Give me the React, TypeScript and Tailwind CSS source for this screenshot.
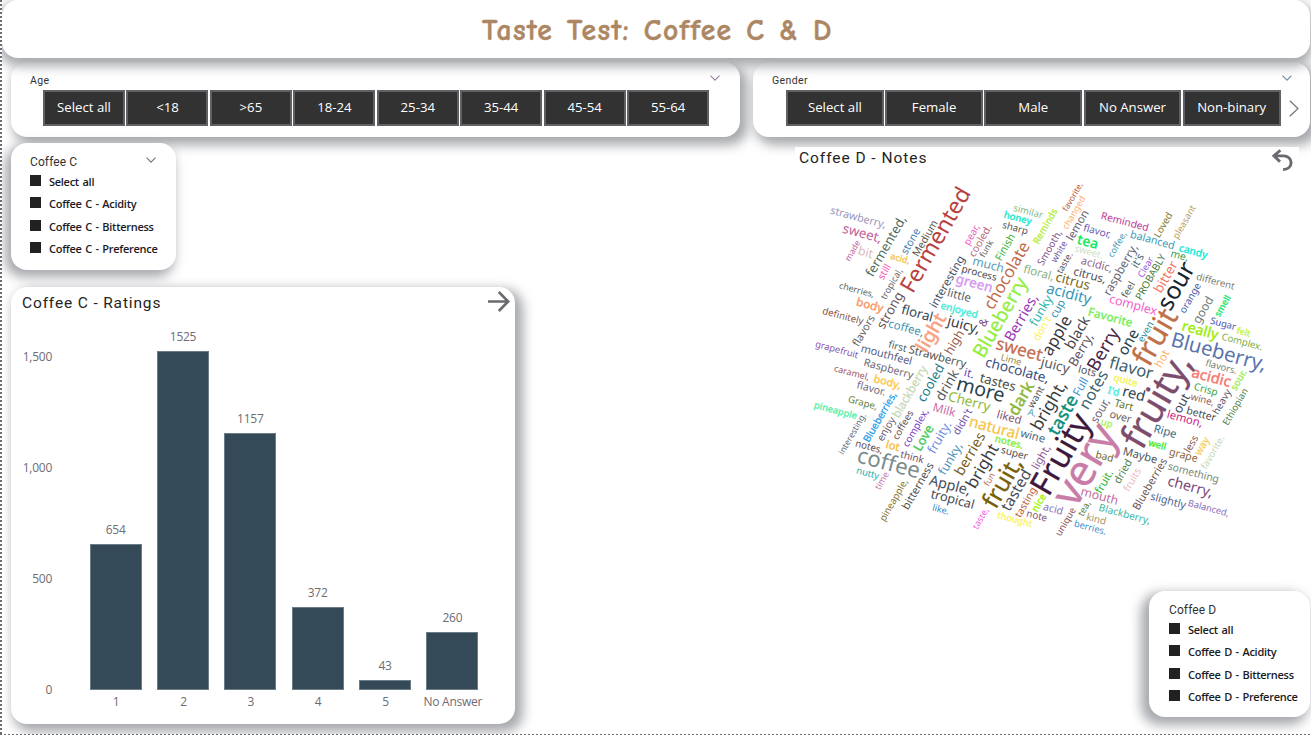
import React from 'react';

type Tilt = 'h' | 'v';
type Word = [string, number, number, number, Tilt, string, boolean?];

// text, centre x, centre y, run length, tilt, colour, heavier weight
const WORDS: Word[] = [
  ['strawberry,', 858, 218, 56, 'h', '#9a94b8'],
  ['sweet,', 862, 234, 39, 'h', '#c0609a'],
  ['made', 853, 251, 21, 'v', '#c060a0'],
  ['bit', 865.3, 253, 14, 'h', '#e0b8bc'],
  ['fermented,', 886.5, 246.5, 67, 'v', '#4f6b5c'],
  ['stone', 911, 241.5, 27, 'v', '#3f7ab0'],
  ['Medium', 925.5, 238.5, 39, 'v', '#5a5a50'],
  ['acid,', 900, 259, 18.7, 'h', '#f2c84b', true],
  ['Fermented', 936.5, 240.5, 116, 'v', '#b8423f'],
  ['still', 884.7, 272, 15, 'v', '#f05ab0'],
  ['tropical,', 892, 284, 33.5, 'v', '#66666e'],
  ['cherries,', 856.5, 290.5, 35, 'h', '#5c6a68'],
  ['body', 869.6, 305.7, 26.5, 'h', '#f79a6a', true],
  ['definitely', 842.7, 316.5, 41, 'h', '#8a5648'],
  ['strong', 890.6, 310.7, 39, 'v', '#6b5252'],
  ['floral', 917, 314, 31, 'h', '#33475a'],
  ['coffee,', 906, 328.7, 35, 'h', '#3f93b0'],
  ['flavors', 864, 331, 33, 'v', '#5f5f62'],
  ['interesting', 947.7, 282, 57, 'v', '#3f4f60'],
  ['little', 959, 296, 23, 'h', '#5f5f66'],
  ['much', 988, 265.3, 31, 'h', '#5a9ab8'],
  ['process', 979, 273.7, 35, 'h', '#4c4c4c'],
  ['green', 974, 284, 36.5, 'h', '#d69af0', true],
  ['enjoyed', 959, 310.7, 37, 'h', '#45e8d4', true],
  ['juicy,', 963.5, 325.5, 32, 'h', '#3c3c42'],
  ['pear,', 972, 235, 21, 'v', '#f060c0'],
  ['cooled.', 980.7, 241, 34, 'v', '#b86a78'],
  ['funk', 986.7, 249, 17, 'v', '#5a5a5a'],
  ['Finish', 1005.5, 247.5, 28, 'v', '#38b030'],
  ['chocolate', 1007.5, 276, 74, 'v', '#c06a48'],
  ['similar', 1028, 212, 29, 'h', '#8cb888'],
  ['honey', 1017.5, 218.5, 27, 'h', '#14e8c8', true],
  ['sharp', 1015, 228.5, 25, 'h', '#565656'],
  ['Reminds', 1045.6, 226.5, 38, 'v', '#b8ee48', true],
  ['floral,', 1038.6, 273.3, 30, 'h', '#88b080'],
  ['Blueberry', 1001, 318, 88, 'v', '#92ee40', true],
  ['Berries,', 1022, 318, 51, 'v', '#9a38b8'],
  ['funky', 1041.5, 311, 32, 'v', '#30b8b0'],
  ["don't", 1042.5, 329, 25, 'v', '#fbf060'],
  ['cup', 1058, 309, 18, 'v', '#3898b8'],
  ['&', 984, 322.7, 7, 'v', '#80507e'],
  ['Smooth,', 1050, 248, 38, 'v', '#84508a'],
  ['white', 1059.5, 252, 22, 'v', '#6a58a8'],
  ['taste.', 1065, 263, 22, 'v', '#5a5258'],
  ['lemon', 1078, 225.6, 32, 'v', '#6a6270'],
  ['favorite,', 1073, 197, 31, 'v', '#b85a40'],
  ['changed', 1074.3, 213, 36, 'v', '#fbb070'],
  ['flavor,', 1097, 231.7, 27, 'h', '#6858b0'],
  ['tea', 1087.5, 242.5, 20, 'h', '#10e860', true],
  ['sweet.', 1088.7, 252.3, 28, 'h', '#d0e0c0'],
  ['coffee,', 1117.6, 244.6, 27, 'v', '#4a98b0'],
  ['acidic,', 1096.6, 265, 31, 'h', '#94648c'],
  ['citrus,', 1089.6, 276, 32, 'h', '#4e4e58'],
  ['citrus', 1072.6, 282, 34, 'h', '#7c6820'],
  ['acidity', 1068.5, 294.5, 44.5, 'h', '#3898b8'],
  ['raspberry,', 1121, 270, 56, 'v', '#646474'],
  ["it's", 1138, 261, 13, 'v', '#3c5a70'],
  ['Clear', 1146, 267.3, 21, 'v', '#9a50e0'],
  ['PROBABLY', 1151, 277.3, 49.5, 'v', '#4c7c3c'],
  ['feel', 1128.6, 290, 16, 'v', '#56564e'],
  ['complex', 1133, 305.6, 48, 'h', '#f460cc'],
  ['Favorite', 1110, 318, 44.5, 'h', '#78ee58', true],
  ['Reminded', 1124.6, 222.3, 48, 'h', '#c03898'],
  ['Loved', 1163.6, 225.3, 26, 'v', '#7c7a30'],
  ['pleasant', 1184.6, 222.3, 36, 'v', '#b8a068'],
  ['balanced', 1152.3, 240.6, 44.5, 'h', '#3c9ab4'],
  ['candy', 1193, 252, 28, 'h', '#14e8d8', true],
  ['me,', 1179.5, 256, 17, 'h', '#3ca050'],
  ['bitter', 1166.3, 277.3, 33, 'v', '#f47464'],
  ['sour', 1177, 286.6, 50, 'v', '#14242c'],
  ['orange', 1190.6, 298.3, 32, 'v', '#4456a8'],
  ['good', 1203.6, 310.3, 28, 'v', '#727a78'],
  ['different', 1215.3, 282, 38, 'h', '#7c7c70'],
  ['smell', 1223, 306.3, 22, 'v', '#18ea70', true],
  ['Sugar', 1223, 324.3, 25, 'h', '#4458b4'],
  ['felt', 1243.3, 332.6, 13, 'h', '#c8f440', true],
  ['really', 1200, 331, 36, 'h', '#a0ec10', true],
  ['even', 1146, 332, 21, 'v', '#2a8c90'],
  ['fruit', 1156.5, 338, 59, 'v', '#c07048', true],
  ['one', 1129, 342.5, 26, 'v', '#24404c'],
  ['Berry', 1104, 350, 45, 'v', '#4a2448'],
  ['black', 1078, 333, 34, 'v', '#44444c'],
  ['Berry,', 1081.5, 350, 35, 'v', '#64505c'],
  ['apple', 1057.5, 336, 42, 'v', '#38383e'],
  ['flavor', 1131, 369, 43.5, 'h', '#3c606c'],
  ['hot', 1162.5, 359, 17, 'v', '#fbb464'],
  ['Blueberry,', 1218.5, 353, 97, 'h', '#5a74ac'],
  ['Complex.', 1242, 342.3, 41, 'h', '#7cac48'],
  ['flavors.', 1221, 367.3, 31, 'h', '#768476'],
  ['acidic', 1211, 378, 39, 'h', '#f87a74', true],
  ['Crisp', 1205.6, 390, 23, 'h', '#3ca03c'],
  ['sour.', 1239, 380.3, 21, 'v', '#a4ee58', true],
  ['wine,', 1202.3, 400, 23, 'h', '#94605c'],
  ['heavy', 1222.3, 402, 26, 'v', '#5a5668'],
  ['Ethiopian', 1235.6, 407, 40, 'v', '#4e7c44'],
  ['better', 1201, 414.6, 29, 'h', '#46464c'],
  ['out', 1182, 403.6, 19, 'v', '#3e4a5c'],
  ['lemon,', 1184.6, 419.3, 35.5, 'h', '#cc2484'],
  ['Ripe', 1165, 432, 22, 'h', '#386a84'],
  ['well', 1157, 445.3, 17, 'h', '#40ea38', true],
  ['fruity,', 1158.5, 401.5, 102, 'v', '#7c4c6c', true],
  ['quite', 1125.3, 381, 23.5, 'h', '#f4f460', true],
  ["I'd", 1113.3, 392, 10.5, 'h', '#40f0e0', true],
  ['red', 1133.6, 394.6, 22, 'h', '#2c4450'],
  ['Tart', 1123.6, 405.6, 18, 'h', '#62742c'],
  ['over', 1120.3, 417.3, 21, 'h', '#6c5c58'],
  ['up', 1106.6, 423.6, 11, 'h', '#b0f45c', true],
  ['lots', 1087, 371.6, 17, 'h', '#565656'],
  ['Full', 1081, 387, 18, 'v', '#4494d0'],
  ['notes', 1094.3, 390.3, 41, 'v', '#406470'],
  ['sour,', 1100.6, 411, 25, 'v', '#706878'],
  ['taste', 1063.5, 415.5, 42, 'v', '#10907c', true],
  ['Fruity', 1062.5, 455, 87, 'v', '#3c183c', true],
  ['very', 1086.5, 466, 86, 'v', '#c87ca8', true],
  ['bad', 1104.3, 457, 17, 'h', '#726424'],
  ['Maybe', 1140, 456, 34, 'h', '#4c5658'],
  ['dried', 1123.3, 471.6, 25, 'v', '#50804a'],
  ['fruit.', 1104.5, 482, 24, 'v', '#34b838'],
  ['fruits', 1132.6, 480, 24, 'v', '#e8bcc0'],
  ['Blueberries', 1150.3, 484.3, 57, 'v', '#685454'],
  ['grape', 1183.3, 455.6, 28, 'h', '#8c6440'],
  ['less', 1191.6, 444.3, 17, 'v', '#885850'],
  ['way', 1202.5, 446.6, 18, 'v', '#fbd06c', true],
  ['favorite.', 1213, 452.6, 36, 'v', '#c4d8b8'],
  ['something', 1193.3, 473.3, 51.5, 'h', '#7a8878'],
  ['cherry,', 1190, 487.3, 45, 'h', '#7c4874'],
  ['slightly', 1168, 501.3, 35, 'h', '#50608c'],
  ['Balanced,', 1208.3, 508.6, 41, 'h', '#8870c0'],
  ['mouth', 1099.3, 496.6, 37, 'h', '#c06ca0'],
  ['Blackberry,', 1124.3, 514.6, 52, 'h', '#40b49c'],
  ['tea,', 1084.6, 508.6, 15, 'v', '#627828'],
  ['kind', 1096, 519.6, 19, 'h', '#a89460'],
  ['berries.', 1090, 528, 32, 'h', '#3c8ccc'],
  ['unique', 1066, 522, 30, 'v', '#885060'],
  ['acid', 1053, 509.5, 19, 'h', '#8870bc'],
  ['grapefruit', 836.6, 350, 43, 'h', '#8454a8'],
  ['mouthfeel', 886.3, 355.3, 51.5, 'h', '#56608c'],
  ['first', 897.3, 347, 17.5, 'h', '#4e5c5c'],
  ['Strawberry', 937.3, 357.3, 58, 'h', '#56564e'],
  ['Raspberry', 888.3, 369.3, 50, 'h', '#6c6878'],
  ['caramel,', 851.6, 373.3, 35, 'h', '#9c5864'],
  ['body,', 887.3, 382.6, 27, 'h', '#fbc848', true],
  ['flavor.', 871, 389, 28.5, 'h', '#746c80'],
  ['Grape,', 862.6, 403.3, 29, 'h', '#68803c'],
  ['pineapple', 835.3, 411, 43, 'h', '#5ceea8', true],
  ['interesting.', 852.6, 434, 45, 'v', '#60686c'],
  ['Blueberries,', 880.3, 417.3, 55, 'v', '#1c9ce8', true],
  ['enjoy', 886.6, 429.3, 25, 'v', '#686070'],
  ['coffees', 903.3, 425.3, 31, 'v', '#604c4c'],
  ['blackberry', 910.3, 392, 57, 'v', '#c8d8b8', true],
  ['cooled', 931.3, 383.3, 40, 'v', '#1c7c8c'],
  ['drink', 947.6, 385.6, 32, 'v', '#545c58'],
  ['it.', 969, 374, 9, 'h', '#6844b0'],
  ['high', 954.8, 342.6, 25, 'v', '#985c4c'],
  ['light', 932, 333, 40, 'v', '#fba080', true],
  ['complex,', 916, 428, 41, 'v', '#7838c8'],
  ['Love', 924, 438.3, 27, 'v', '#48cc5c', true],
  ['fruity.', 940, 437.6, 34, 'v', '#7090e4'],
  ['Milk', 944, 410.6, 22, 'h', '#c86ca8'],
  ['Cherry', 969, 402.3, 42, 'h', '#90b83c'],
  ['more', 980.3, 390.6, 48, 'h', '#2c4450'],
  ['tastes', 997.6, 383, 35.5, 'h', '#484c44'],
  ['chocolate,', 1017, 371, 64.5, 'h', '#3c5080'],
  ['Lime', 1011, 360.3, 20, 'h', '#988848'],
  ['sweet', 1019, 350.3, 46, 'h', '#c46c4c', true],
  ['juicy', 1055, 366, 28, 'h', '#5a5a5a'],
  ['dark', 1021.8, 399, 35, 'v', '#8cb83c', true],
  ['want', 1036.3, 397.3, 22, 'v', '#5c5456'],
  ['A.', 1032, 413.3, 7.5, 'h', '#58a0b8'],
  ['bright,', 1049.5, 406, 53, 'v', '#383e3c'],
  ['liked', 1009, 418, 24, 'h', '#845474'],
  ['natural', 994, 428.6, 50, 'h', '#f8c444', true],
  ['wine', 1032.6, 436.6, 24, 'h', '#486478'],
  ['notes.', 1009, 442.6, 28, 'h', '#84ee3c', true],
  ['super', 1014.3, 453.6, 26, 'h', '#505050'],
  ["didn't", 963, 422, 27, 'v', '#7048a8'],
  ['notes,', 869, 447.3, 27, 'h', '#604c50'],
  ['lot', 892.6, 446.6, 13, 'h', '#fbc040', true],
  ['think', 912, 457.6, 23, 'h', '#785468'],
  ['coffee', 888.3, 464.3, 63, 'h', '#7c8c8c'],
  ['nutty', 867.6, 473.6, 22, 'h', '#28acac'],
  ['time', 882.3, 481, 18, 'v', '#c474a4'],
  ['pineapple,', 894, 500.3, 46, 'v', '#847434'],
  ['bitterness', 918.3, 486.3, 51, 'v', '#50504c'],
  ['funky,', 950.8, 459, 34, 'v', '#4c94bc'],
  ['berries', 970.5, 454.3, 46, 'v', '#786020'],
  ['bright', 983, 466.6, 47, 'v', '#3c3c40'],
  ['Apple,', 949.8, 486, 41, 'h', '#444c5c'],
  ['tropical', 952.3, 500, 43.5, 'h', '#484850'],
  ['like.', 940.6, 510, 16, 'h', '#3488cc'],
  ['fun', 989.6, 479.6, 12.5, 'v', '#b07058'],
  ['fruit,', 1003.5, 483, 54, 'v', '#786008', true],
  ['tasted', 1016.8, 490.6, 44, 'v', '#484c58'],
  ['tasting', 1026, 502.6, 32, 'v', '#bc5c3c'],
  ['nice', 1039.3, 503, 18, 'v', '#9cf40c', true],
  ['note', 1036.6, 516.3, 20, 'h', '#845474'],
  ['thought', 1014.6, 520, 34.5, 'h', '#fbf46c', true],
  ['taste,', 981, 518.6, 22, 'v', '#f45ce4'],
  ['light,', 1041.6, 457.3, 25, 'v', '#8c5494'],
];

const CLOUD_FONT = '"Noto Sans", "Open Sans", sans-serif';

let measuring: CanvasRenderingContext2D | null = null;
function fitSize(text: string, length: number, weight: number) {
  if (!measuring) measuring = document.createElement('canvas').getContext('2d');
  if (!measuring) return 10;
  measuring.font = `${weight} 100px ${CLOUD_FONT}`;
  return (length * 100) / measuring.measureText(text).width;
}

function WordCloud() {
  return (
    <svg className="block h-[400px] w-[505px]" viewBox="794.9 147 505 400" fontFamily={CLOUD_FONT}>
      {WORDS.map(([text, x, y, length, tilt, color, heavy], i) => {
        // only small words gain weight; large ones are heavy enough already
        const weight = heavy && length < 46 ? 500 : 400;
        const size = fitSize(text, length + 1.2, weight);
        return (
          <text
            key={i}
            transform={`translate(${x} ${y}) rotate(${tilt === 'h' ? 15 : -60})`}
            y={size * 0.28}
            textAnchor="middle"
            fontSize={size}
            fontWeight={weight}
            stroke={heavy ? color : 'none'}
            strokeWidth="0.25"
            fill={color}
          >
            {text}
          </text>
        );
      })}
    </svg>
  );
}

function Chevron({ color = '#7c7c94' }: { color?: string }) {
  return (
    <svg className="h-[6px] w-[10px]" viewBox="0 0 10 6" fill="none" stroke={color} strokeWidth="1.1">
      <path d="M0.5 0.6 5 5.1 9.5 0.6" />
    </svg>
  );
}

function Tiles({ items, width }: { items: string[]; width: string }) {
  return (
    <div className="flex">
      {items.map((item) => (
        <div key={item} className={`${width} h-9 shrink-0 pr-[1.4px]`}>
          <div className="flex h-9 items-center justify-center border-2 border-[#606164] bg-[#323232] pb-[2px] font-['Open_Sans',sans-serif] text-[13.2px] leading-4 whitespace-nowrap text-white">
            {item}
          </div>
        </div>
      ))}
    </div>
  );
}

function CheckSlicer({ name, chevron }: { name: string; chevron?: boolean }) {
  return (
    <div className="pt-[11px] pl-[19px]">
      <div className="flex h-[15px] justify-between pr-[20px] font-['Roboto',sans-serif] text-[12px] leading-4 tracking-[0.1px] text-[#333]">
        {name}
        {chevron && (
          <span className="pt-[3px]">
            <Chevron color="#6f7a6c" />
          </span>
        )}
      </div>
      {['Select all', `${name} - Acidity`, `${name} - Bitterness`, `${name} - Preference`].map((label) => (
        <div key={label} className="flex h-[22.5px] items-center gap-2">
          <span className="size-[11px] bg-[#212121]" />
          <span className="pt-[3px] font-['Open_Sans',sans-serif] text-[11px] leading-4 font-semibold tracking-[-0.28px] whitespace-nowrap text-[#1b1b1f] [word-spacing:1px]">
            {label}
          </span>
        </div>
      ))}
    </div>
  );
}

const RATINGS: [string, number][] = [
  ['1', 654],
  ['2', 1525],
  ['3', 1157],
  ['4', 372],
  ['5', 43],
  ['No Answer', 260],
];

function RatingsChart() {
  return (
    <div className="flex font-['Open_Sans',sans-serif] text-[12px] tracking-[-0.25px] text-[#6f6c73]">
      <div className="flex w-[41px] flex-col pt-[37px] text-right leading-4">
        {['1,500', '1,000', '500', '0'].map((tick) => (
          <div key={tick} className="h-[111px]">
            {tick}
          </div>
        ))}
      </div>
      <div className="ml-[30px] grid h-[402px] w-[404px] grid-cols-6">
        {RATINGS.map(([label, value]) => (
          <div key={label} className="flex h-[402px] flex-col items-center justify-end leading-4">
            <div className="mb-[6px]">{value}</div>
            <div
              className="w-[52px] border border-[#6d7d87] bg-[#354a58]"
              style={{ height: value * 0.222 + 0.5 }}
            />
            <div className="mt-[4px] h-[20px] pl-px whitespace-nowrap">{label}</div>
          </div>
        ))}
      </div>
    </div>
  );
}

export default function App() {
  return (
    <div className="relative h-[735px] w-[1311px] overflow-hidden bg-white">
      <header className="relative z-10 ml-[2px] flex h-[58px] w-[1308px] items-center justify-center rounded-[16px] bg-white shadow-[0_5px_12px_3px_#a6a8ac]">
        <h1 className="pt-[3px] pl-[3px] font-['Comic_Sans_MS','Comic_Neue','Open_Sans',sans-serif] text-[29.5px] font-bold tracking-[1.4px] whitespace-nowrap text-[#ad8763] [-webkit-text-stroke:0.5px_#ad8763] [word-spacing:2px]">
          Taste Test: Coffee C &amp; D
        </h1>
      </header>

      <div className="mt-[4px] ml-[11px] flex gap-[13px]">
        <section className="h-[75px] w-[729px] shrink-0 rounded-[16px] bg-white shadow-[5px_5px_12px_3px_#a6a8ac]">
          <div className="flex h-7 justify-between pt-[11px] pr-[20px] pl-[19px] font-['Roboto',sans-serif] text-[10.5px] leading-[15px] tracking-[0.4px] text-[#333]">
            Age
            <span className="pt-[2px]">
              <Chevron color="#94809c" />
            </span>
          </div>
          <div className="pl-8">
            <Tiles width="w-[83.45px]" items={['Select all', '<18', '>65', '18-24', '25-34', '35-44', '45-54', '55-64']} />
          </div>
        </section>
        <section className="h-[75px] w-[557px] shrink-0 rounded-[16px] bg-white shadow-[5px_5px_12px_3px_#a6a8ac]">
          <div className="flex h-7 justify-between pt-[11px] pr-[18px] pl-[19px] font-['Roboto',sans-serif] text-[10.5px] leading-[15px] tracking-[0.4px] text-[#333]">
            Gender
            <span className="pt-[2px]">
              <Chevron color="#7088a0" />
            </span>
          </div>
          <div className="flex items-center pl-[33px]">
            <Tiles width="w-[99.2px]" items={['Select all', 'Female', 'Male', 'No Answer', 'Non-binary']} />
            <svg className="ml-[7px] h-[17px] w-[10px]" viewBox="0 0 10 17" fill="none" stroke="#77727a" strokeWidth="1.2">
              <path d="M0.8 0.8 9 8.5 0.8 16.2" />
            </svg>
          </div>
        </section>
      </div>

      <div className="ml-[11px] flex justify-between">
        <div className="pt-[6px]">
          <section className="relative h-[127px] w-[165px] rounded-[16px] bg-white shadow-[-4px_5px_12px_2px_#a6a8ac]">
            <CheckSlicer name="Coffee C" chevron />
          </section>
          <section className="relative mt-[17px] h-[437px] w-[504px] rounded-[16px] bg-white shadow-[5px_5px_12px_3px_#a6a8ac]">
            <div className="flex h-[25px] items-center justify-between pt-[5px] pr-[5px] pl-[11px] font-['Roboto',sans-serif] text-[15.5px] tracking-[0.85px] whitespace-nowrap text-[#252423]">
              <span className="pt-[3px]">Coffee C - Ratings</span>
              <svg className="-mt-[2px] h-[22px] w-[22px]" viewBox="0 0 22 22" fill="none" stroke="#6c6970" strokeWidth="2.6">
                <path d="M0 11.5H20M10.8 2 20.2 11.5 10.8 21" />
              </svg>
            </div>
            <RatingsChart />
          </section>
        </div>

        <div className="flex w-[516px] flex-col items-start pt-[10px]">
          <section className="relative h-[400px] w-[504px] bg-white">
            <div className="flex h-0 justify-between pr-[6px] pl-[4px] font-['Roboto',sans-serif] text-[15.5px] leading-[22px] tracking-[0.95px] whitespace-nowrap text-[#252423]">
              <span>Coffee D - Notes</span>
              <svg className="mt-[2px] h-[22px] w-[21px] shrink-0" viewBox="0 0 20 22" preserveAspectRatio="none" fill="none" stroke="#6c6970" strokeWidth="2.8">
                <path d="M8 1.2 1.8 6.8 7.6 12.8M2 6.8H11C15 6.8 18.2 9.6 18.2 13.6S15.2 20.6 10.5 20.6" />
              </svg>
            </div>
            <WordCloud />
          </section>
          <section className="mt-[44px] mr-[1px] h-[126px] w-[161px] self-end rounded-[16px] bg-white pl-px shadow-[-5px_5px_12px_3px_#a6a8ac]">
            <div className="-mt-px pt-px">
              <CheckSlicer name="Coffee D" />
            </div>
          </section>
        </div>
      </div>

      <div className="absolute top-0 left-0 z-20 h-full w-[2px] bg-[repeating-linear-gradient(180deg,#6e6973_0_2px,#ffffff_2px_4px)]" />
      <div className="absolute bottom-0 left-0 z-20 h-px w-full bg-[repeating-linear-gradient(90deg,#6e6973_0_2px,#ffffff_2px_4px)]" />
    </div>
  );
}
